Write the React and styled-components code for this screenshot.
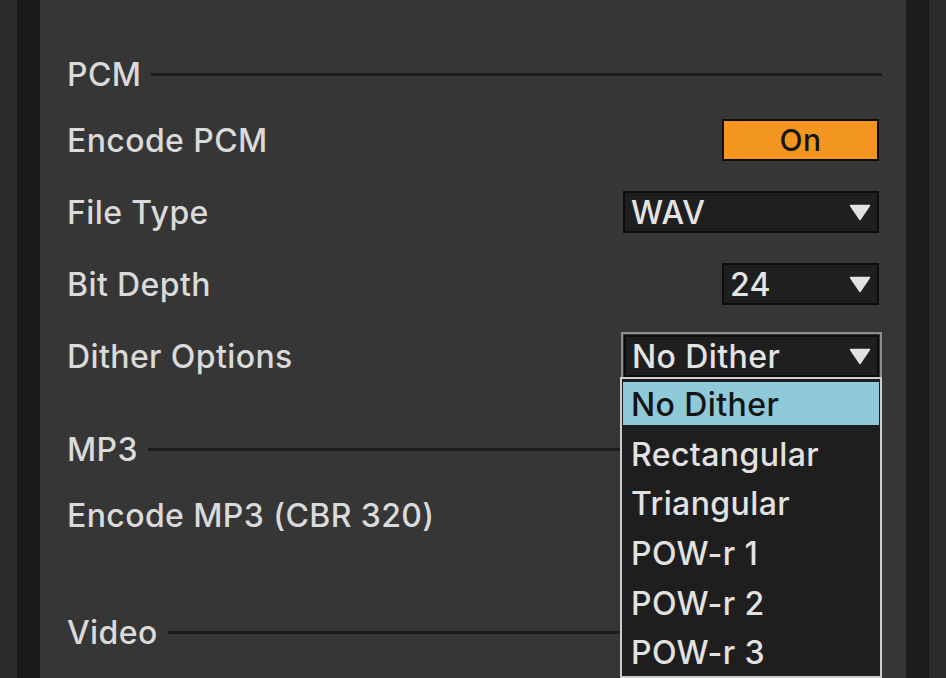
import React from "react";
import styled, { createGlobalStyle } from "styled-components";

const Global = createGlobalStyle`
  html, body { margin: 0; padding: 0; background: #2a2a2a; }
  body { font-family: Inter, "Noto Sans", sans-serif; }
`;

const Page = styled.div`
  display: flex;
  width: 946px;
  height: 678px;
  overflow: hidden;
  background: #2a2a2a;
`;

const Edge = styled.div`
  flex: 0 0 17px;
  background: #2b2b2b;
`;

const Gutter = styled.div`
  flex: 0 0 23px;
  background: ${(p) => p.$tone || "#1b1b1b"};
`;

const Panel = styled.div`
  flex: 1;
  background: #363636;
  padding: 44px 24px 0 27px;
  display: flex;
  flex-direction: column;
  color: #dadada;
  font-size: 32px;
  font-weight: 500;
  letter-spacing: 0.4px;
`;

const SectionHead = styled.div`
  display: flex;
  align-items: center;
  gap: 10px;
  height: 60px;
  margin-top: ${(p) => p.$gap || 0}px;
  flex-shrink: 0;
`;

const Rule = styled.div`
  flex: 1;
  height: 3px;
  background: #1c1c1c;
  margin-top: 1px;
`;

const Row = styled.div`
  display: flex;
  align-items: center;
  justify-content: space-between;
  height: 72px;
  flex-shrink: 0;
`;

const Label = styled.span`
  white-space: nowrap;
`;

const Toggle = styled.div`
  width: 153px;
  height: 38px;
  box-sizing: content-box;
  border: 2px solid #0c0c0c;
  background: #f3961f;
  color: #141414;
  display: flex;
  align-items: center;
  justify-content: center;
  margin-right: 3px;
  font-size: 30px;
`;

const Select = styled.div`
  box-sizing: border-box;
  width: ${(p) => p.$w}px;
  height: 42px;
  border: 2px solid #0c0c0c;
  background: #1f1f1f;
  color: #e4e4e4;
  display: flex;
  align-items: center;
  justify-content: space-between;
  padding: 0 6px 0 6px;
  margin-right: ${(p) => (p.$bare ? 3 : 0)}px;
`;

const Focus = styled.div`
  position: relative;
  border: 2px solid #8e8e8e;
  padding: 1px;
`;

const Menu = styled.div`
  position: absolute;
  top: 100%;
  left: -3px;
  right: -2px;
  margin-top: -1px;
  border: 2px solid #cdcdcd;
  background: #1e1e1e;
  padding: 3px 1px 0;
  z-index: 2;
`;

const Item = styled.div`
  box-sizing: border-box;
  height: ${(p) => (p.$active ? 43 : 49.6)}px;
  margin-bottom: ${(p) => (p.$active ? 3 : 0)}px;
  padding-top: ${(p) => (p.$active ? 1 : 3)}px;
  display: flex;
  align-items: center;
  padding-left: 8px;
  background: ${(p) => (p.$active ? "#8fcad9" : "transparent")};
  color: ${(p) => (p.$active ? "#141414" : "#e2e2e2")};
`;

const Arrow = () => (
  <svg width="22" height="17" viewBox="0 0 22 17">
    <path d="M1.5 1.5 H20.5 L11 15.5 Z" fill="#e2e2e2" stroke="#e2e2e2" strokeWidth="1.5" strokeLinejoin="round" />
  </svg>
);

const options = ["No Dither", "Rectangular", "Triangular", "POW-r 1", "POW-r 2", "POW-r 3"];

export default function App() {
  return (
    <>
      <Global />
      <Page>
        <Edge />
        <Gutter $tone="#1a1a1a" />
        <Panel>
          <SectionHead>
            <Label>PCM</Label>
            <Rule />
          </SectionHead>
          <Row>
            <Label>Encode PCM</Label>
            <Toggle>On</Toggle>
          </Row>
          <Row>
            <Label>File Type</Label>
            <Select $w={256} $bare>
              <span>WAV</span>
              <Arrow />
            </Select>
          </Row>
          <Row>
            <Label>Bit Depth</Label>
            <Select $w={157} $bare>
              <span>24</span>
              <Arrow />
            </Select>
          </Row>
          <Row>
            <Label>Dither Options</Label>
            <Focus>
              <Select $w={255}>
                <span>No Dither</span>
                <Arrow />
              </Select>
              <Menu>
                {options.map((o, i) => (
                  <Item key={o} $active={i === 0}>
                    {o}
                  </Item>
                ))}
              </Menu>
            </Focus>
          </Row>
          <SectionHead $gap={27}>
            <Label>MP3</Label>
            <Rule />
          </SectionHead>
          <Row>
            <Label>Encode MP3 (CBR 320)</Label>
          </Row>
          <SectionHead $gap={51}>
            <Label>Video</Label>
            <Rule />
          </SectionHead>
        </Panel>
        <Gutter $tone="#1c1c1c" />
        <Edge />
      </Page>
    </>
  );
}
